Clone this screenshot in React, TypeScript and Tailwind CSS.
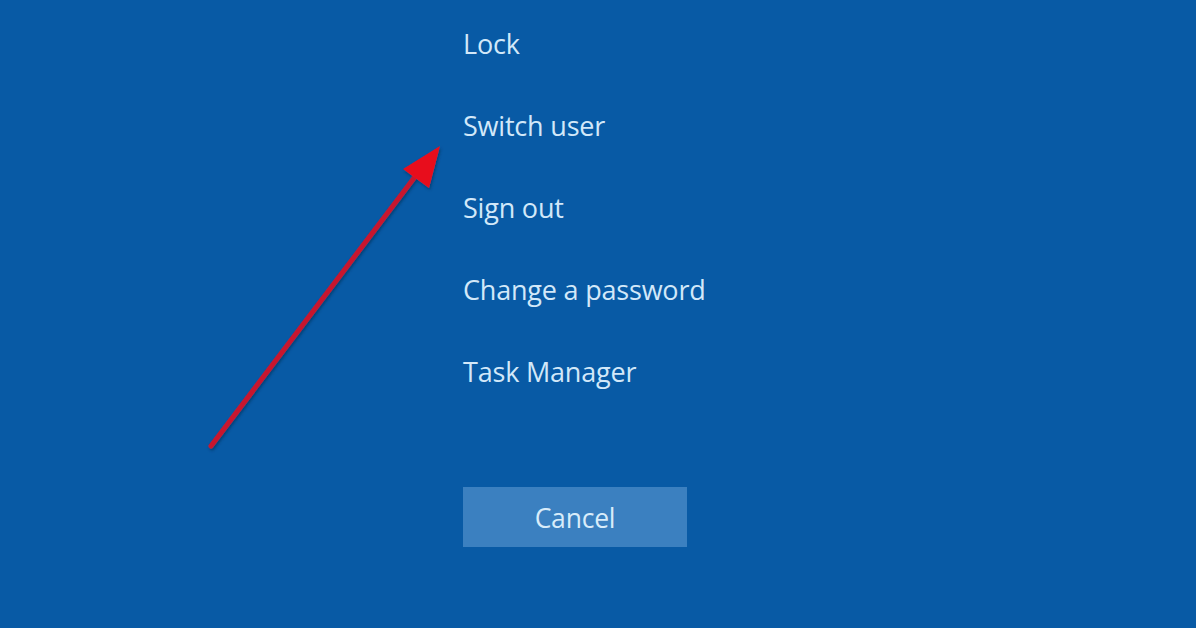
import React from "react";

const options = ["Lock", "Switch user", "Sign out", "Change a password", "Task Manager"];

export default function App() {
  return (
    <div className="relative w-[1196px] h-[628px] overflow-hidden bg-[#085aa5] font-['Open_Sans','Noto_Sans',sans-serif]">
      <div className="flex flex-col pl-[463px] pt-[24px]">
        {options.map((label) => (
          <div key={label} className="h-[82px] text-[27px] leading-[40px] text-[#d2e8f9] tracking-[-0.2px]">
            {label}
          </div>
        ))}
        <button className="mt-[53px] w-[224px] h-[60px] pt-[4px] bg-[#3b80c0] text-[26.5px] text-[#d8ecfa] tracking-[-0.2px]">
          Cancel
        </button>
      </div>

      {/* red annotation arrow */}
      <svg className="absolute left-0 top-0" width="1196" height="628" viewBox="0 0 1196 628">
        <defs>
          <filter id="sh" x="-20%" y="-20%" width="140%" height="140%">
            <feDropShadow dx="1" dy="2" stdDeviation="1.5" floodColor="#06325e" floodOpacity="0.7" />
          </filter>
        </defs>
        <g filter="url(#sh)">
          <line x1="211" y1="446" x2="414" y2="178" stroke="#c8182e" strokeWidth="5" strokeLinecap="round" />
          <polygon points="440,146 429,188 403,169" fill="#e8101c" />
        </g>
      </svg>
    </div>
  );
}
